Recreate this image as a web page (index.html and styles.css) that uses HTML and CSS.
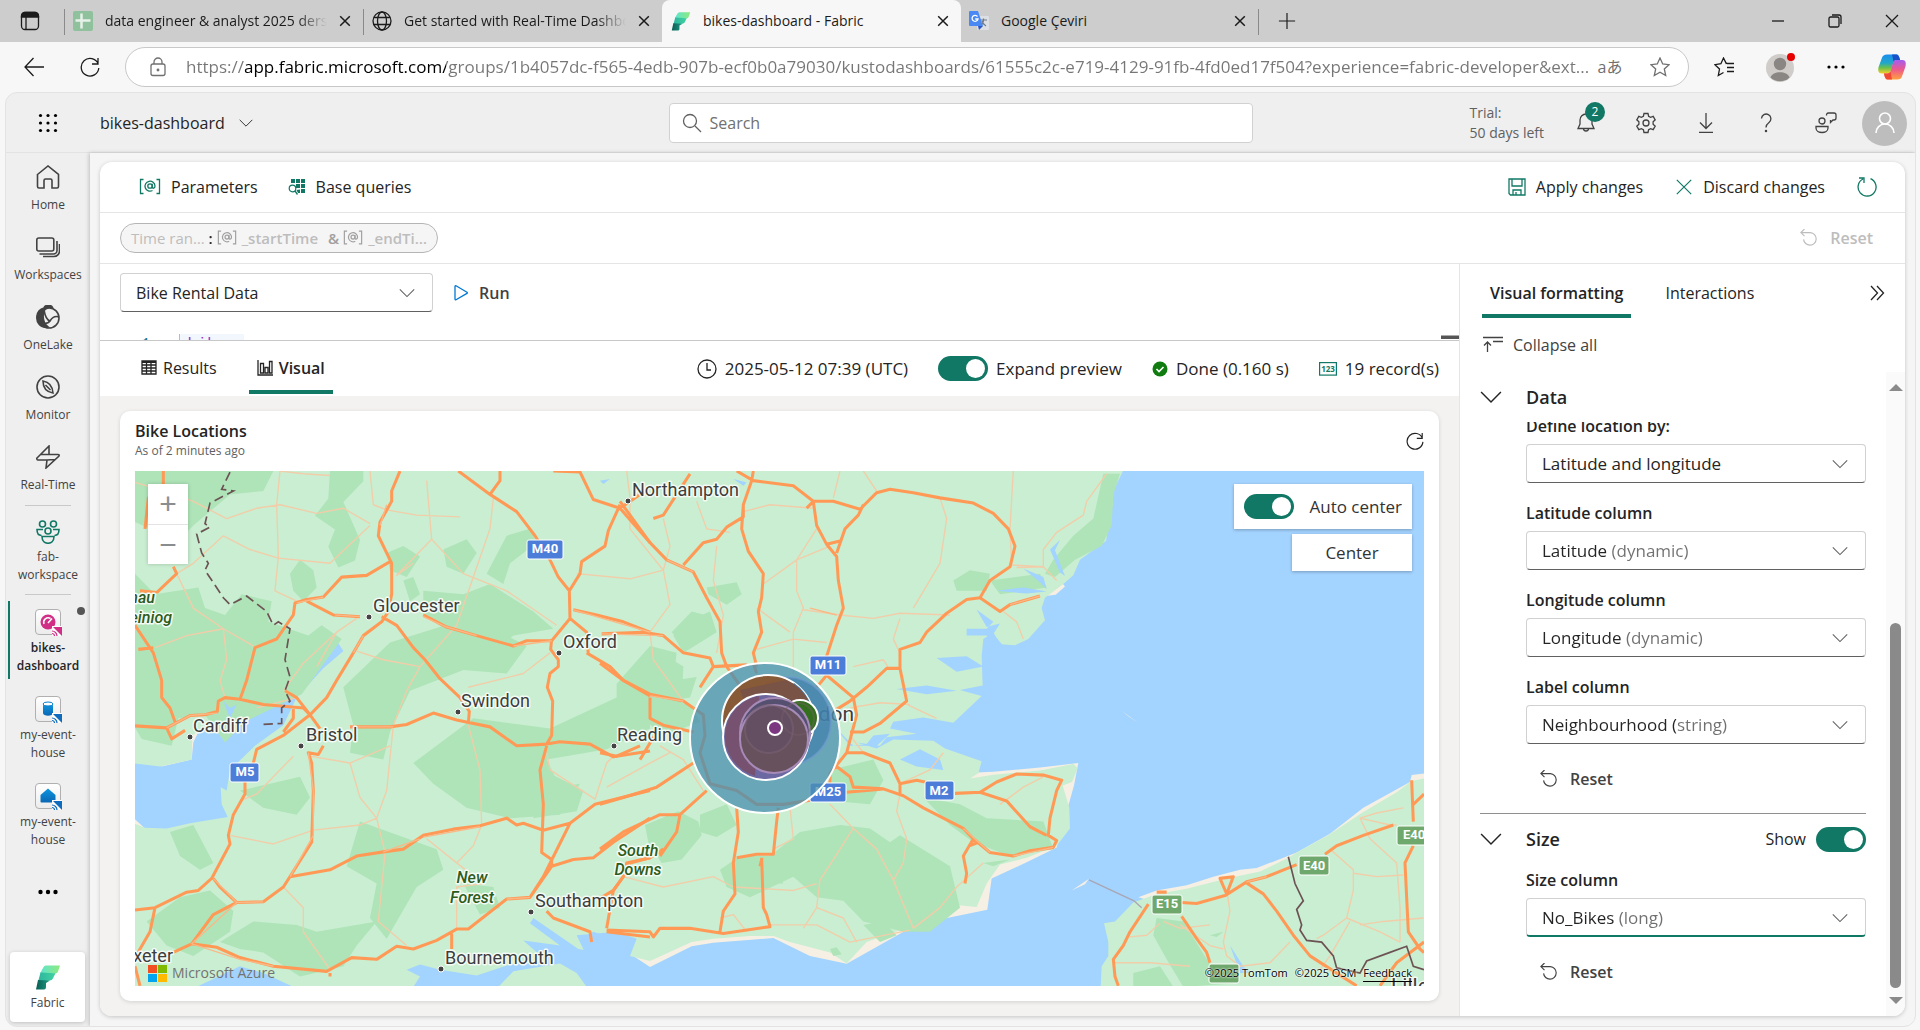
FILE: index.html
```html
<!DOCTYPE html>
<html lang="en">
<head>
<meta charset="utf-8">
<title>bikes-dashboard - Fabric</title>
<link rel="stylesheet" href="styles.css">
</head>
<body>
<svg class="defs" aria-hidden="true">
  <defs>
    <linearGradient id="fab-a" x1="0" y1="0" x2="1" y2="0"><stop offset="0" stop-color="#5fe3cf"/><stop offset="1" stop-color="#8dea7e"/></linearGradient>
    <linearGradient id="fab-b" x1="0" y1="0" x2="1" y2="0"><stop offset="0" stop-color="#2fb59f"/><stop offset="1" stop-color="#3fd2a0"/></linearGradient>
    <linearGradient id="fab-c" x1="0" y1="0" x2="1" y2="0"><stop offset="0" stop-color="#0a5e54"/><stop offset="1" stop-color="#1d9b84"/></linearGradient>
    <linearGradient id="cop-a" x1="0" y1="0" x2="0" y2="1"><stop offset="0" stop-color="#1a8df0"/><stop offset=".45" stop-color="#22a7c8"/><stop offset=".7" stop-color="#6cc04a"/><stop offset="1" stop-color="#f6cf2b"/></linearGradient>
    <linearGradient id="cop-b" x1="0" y1="0" x2="0" y2="1"><stop offset="0" stop-color="#a45cf0"/><stop offset=".5" stop-color="#ee5a8b"/><stop offset="1" stop-color="#ffa13d"/></linearGradient>
    <linearGradient id="blue" x1="0" y1="0" x2="0" y2="1"><stop offset="0" stop-color="#0d96e0"/><stop offset="1" stop-color="#0b67b4"/></linearGradient>
  </defs>
  <symbol id="chevron" viewBox="0 0 20 20"><path d="M1 5.500l9 9 9-9"/></symbol>
  <symbol id="close" viewBox="0 0 20 20"><path d="M2 2l16 16M18 2L2 18"/></symbol>
  <symbol id="undo" viewBox="0 0 20 20"><path d="M5 0L1 4l4 4M1.500 4H11.500a7 7 0 1 1-7.500 7.500"/></symbol>
  <symbol id="reload" viewBox="0 0 20 20"><path d="M18.200 7A8.800 8.800 0 1 0 18.800 11M18 1v6h-6"/></symbol>
  <symbol id="at" viewBox="0 0 22 18"><path d="M4.500 1.500H1.500v14h3M17.500 1.500h3v14h-3"/><circle cx="11" cy="8" r="2.200"/><path d="M13.200 5.800V9c0 2 2.800 1.600 2.800-1A5 5 0 1 0 13.500 12.500"/></symbol>
  <symbol id="fabric" viewBox="0 0 26 26"><path fill="url(#fab-a)" d="M8 4c1-2 2-2.500 4-2.500h13l-2 6c-.5 1.500-2 2-3 2H5z"/><path fill="url(#fab-b)" d="M5.500 8.500l15 .8-2.500 5c-.6 1.600-2 2.200-3.500 2.200L3 18z"/><path fill="url(#fab-c)" d="M3 16l12 .5-4 2.500 0 4c0 2-1 2.500-3 2.500H1z"/></symbol>
  <symbol id="link-badge" viewBox="0 0 10 10"><path fill="#fff" d="M0 0h10v10H0z"/><path fill="currentColor" d="M1 1h9v9L7 7 5 5z"/><path fill="none" stroke="currentColor" stroke-width="1.200" d="M0 5a5 5 0 0 1 5 5M0 7.500A2.500 2.500 0 0 1 2.500 10"/></symbol>
</svg>

<header class="browser">
  <div class="tabstrip">
    <button class="tab-menu" aria-label="Tab actions"><svg class="i i20" viewBox="0 0 20 20"><rect x="1.500" y="1.500" width="17" height="17" rx="3.500"/><path d="M6 6v12"/><path class="solid" d="M1.500 6V5A3.500 3.500 0 0 1 5 1.500h10A3.500 3.500 0 0 1 18.500 5v1z"/></svg></button>
    <div class="tab">
      <svg class="fav" viewBox="0 0 20 20"><rect width="20" height="20" rx="2" fill="#8fc19d"/><path d="M2.500 9.500h15M8.500 2.500v15" stroke="#e6f1e9" stroke-width="2.500"/></svg>
      <span class="tab-title fade">data engineer &amp; analyst 2025 ders notları</span>
      <button class="tab-close" aria-label="Close tab"><svg class="i i12"><use href="#close"/></svg></button>
    </div>
    <div class="tab">
      <svg class="fav i" viewBox="0 0 20 20"><circle cx="10" cy="10" r="9"/><ellipse cx="10" cy="10" rx="4.500" ry="9"/><path d="M2 6.500h16M2 13.500h16"/></svg>
      <span class="tab-title fade">Get started with Real-Time Dashboards</span>
      <button class="tab-close" aria-label="Close tab"><svg class="i i12"><use href="#close"/></svg></button>
    </div>
    <div class="tab active">
      <svg class="fav"><use href="#fabric"/></svg>
      <span class="tab-title">bikes-dashboard - Fabric</span>
      <button class="tab-close" aria-label="Close tab"><svg class="i i12"><use href="#close"/></svg></button>
    </div>
    <div class="tab last">
      <svg class="fav" viewBox="0 0 20 20"><rect x="8" y="5" width="12" height="14" rx="1" fill="#dcdfe4"/><path d="M11 9h7M14.500 7.500V9c0 3-2 5-4 6M13 10c.5 2 2 4 4 5" stroke="#6f7a88" stroke-width="1.200" fill="none"/><path d="M1 0h8l5 15H1a1 1 0 0 1-1-1V1a1 1 0 0 1 1-1z" fill="#4a89f3"/><path d="M10 19l4-4h-5z" fill="#2a56c6"/><path d="M8.500 5.500a3 3 0 1 0 .5 2.500H6.200" stroke="#fff" stroke-width="1.300" fill="none"/></svg>
      <span class="tab-title">Google Çeviri</span>
      <button class="tab-close" aria-label="Close tab"><svg class="i i12"><use href="#close"/></svg></button>
    </div>
    <button class="tab-new" aria-label="New tab"><svg class="i i20" viewBox="0 0 20 20"><path d="M10 1v18M1 10h18"/></svg></button>
    <div class="window-buttons">
      <button aria-label="Minimize"><svg class="i i14" viewBox="0 0 14 14"><path d="M1 7h12"/></svg></button>
      <button aria-label="Restore"><svg class="i i14" viewBox="0 0 14 14"><rect x="1" y="3" width="10" height="10" rx="1.500"/><path d="M4 1h7a2 2 0 0 1 2 2v7"/></svg></button>
      <button aria-label="Close"><svg class="i i14" viewBox="0 0 14 14"><path d="M1 1l12 12M13 1L1 13"/></svg></button>
    </div>
  </div>
  <div class="navbar">
    <button aria-label="Back"><svg class="i i22" viewBox="0 0 22 22"><path d="M21 11H2M10.500 2L2 11l8.500 9"/></svg></button>
    <button aria-label="Refresh"><svg class="i i20"><use href="#reload"/></svg></button>
    <div class="address">
      <svg class="i i20 muted" viewBox="0 0 20 20"><rect x="3" y="7" width="14" height="11.500" rx="2"/><path d="M6 7V5a4 4 0 0 1 8 0v2"/><circle class="solid" cx="10" cy="13" r=".8"/></svg>
      <input aria-label="Address" value="https://app.fabric.microsoft.com/groups/1b4057dc-f565-4edb-907b-ecf0b0a79030/kustodashboards/61555c2c-e719-4129-91fb-4fd0ed17f504?experience=fabric-developer&amp;ext...">
      <button class="translate" aria-label="Translate page">aあ</button>
      <button aria-label="Add to favorites"><svg class="i i20 muted" viewBox="0 0 20 20"><path d="M10 1l2.700 6 6.300.7-4.700 4.300 1.400 6.500L10 15.200 4.300 18.500l1.400-6.500L1 7.700 7.300 7z"/></svg></button>
    </div>
    <div class="nav-end">
      <button aria-label="Favorites"><svg class="i i20" viewBox="0 0 20 20"><path d="M13 6.200L12.200 6.400 9.500 1 6.900 6.700 1 7.700l4.500 4.300-1.200 6.500 5.200-3M13 6.500h7M13 10.500h7M13 14.500h7"/></svg></button>
      <button aria-label="Profile"><svg class="i30" viewBox="0 0 30 30"><circle cx="15" cy="16" r="14" fill="#cfccc9"/><circle cx="15" cy="12" r="6.200" fill="#8a8683"/><path d="M5.500 25.500c2-7 17-7 19 0a14 14 0 0 1-19 0z" fill="#8a8683"/><circle cx="26" cy="5" r="4" fill="#e60000"/></svg></button>
      <button aria-label="More"><svg class="i20" viewBox="0 0 20 20"><circle cx="3" cy="10" r="1.600"/><circle cx="10" cy="10" r="1.600"/><circle cx="17" cy="10" r="1.600"/></svg></button>
      <button aria-label="Copilot"><svg class="i30" viewBox="0 0 30 30"><path fill="url(#cop-a)" d="M10 2.500h9.500c1.700 0 2.300 1.500 2.800 3l.8 2.500h-3.500c-2 0-2.700 1-3.300 3l-2 7c-.8 2.500-1.600 3.500-3.800 3.500H4.500C1.200 21.500.8 18.500 1.600 15L4.700 6.500C5.800 3.500 7 2.500 10 2.500z"/><path fill="#1b50c8" d="M15 2.500h4.500c1.700 0 2.300 1.500 2.800 3l.8 2.500h-3.500c-1.600 0-2.400.7-3 2z"/><path fill="url(#cop-b)" d="M20 27.500h-9.500c-1.700 0-2.300-1.500-2.800-3L7 21.500h3.500c2 0 2.700-1 3.300-3l2-7c.8-2.500 1.600-3.500 3.800-3.500h6c3.200 0 3.700 3 2.900 6.500l-3.200 9C24.300 26.500 23 27.500 20 27.500z"/><path fill="#f04a33" d="M15 27.500h-4.500c-1.700 0-2.300-1.500-2.800-3L7 21.500h3.500c1.600 0 2.400-.7 3-2z"/></svg></button>
    </div>
  </div>
</header>

<div class="frame">
  <header class="app-header">
    <div class="app-name">
      <button class="waffle" aria-label="App launcher"><svg class="i20" viewBox="0 0 20 20"><circle cx="2.500" cy="2.500" r="1.600"/><circle cx="10" cy="2.500" r="1.600"/><circle cx="17.500" cy="2.500" r="1.600"/><circle cx="2.500" cy="10" r="1.600"/><circle cx="10" cy="10" r="1.600"/><circle cx="17.500" cy="10" r="1.600"/><circle cx="2.500" cy="17.500" r="1.600"/><circle cx="10" cy="17.500" r="1.600"/><circle cx="17.500" cy="17.500" r="1.600"/></svg></button>
      <button class="title-button">bikes-dashboard <svg class="i i14"><use href="#chevron"/></svg></button>
    </div>
    <label class="search">
      <svg class="i i20" viewBox="0 0 20 20"><circle cx="8" cy="8" r="6.500"/><path d="M13 13l6 6"/></svg>
      <input type="search" placeholder="Search" aria-label="Search">
    </label>
    <div class="app-tools">
      <div class="trial">Trial:<br>50 days left</div>
      <button class="bell" aria-label="Notifications"><svg class="i i20" viewBox="0 0 20 20"><path d="M10 1a6 6 0 0 0-6 6v4l-2 4.500h16L16 11V7a6 6 0 0 0-6-6zM7.500 15.500a2.500 2.500 0 0 0 5 0"/></svg><span class="badge">2</span></button>
      <button aria-label="Settings"><svg class="i i22" viewBox="0 0 22 22"><circle cx="11" cy="11" r="3"/><path d="M9 1.500h4l.6 2.700 2 1.100 2.600-.9 2 3.400-2.100 1.900v2.600l2.100 1.900-2 3.400-2.600-.9-2 1.100-.6 2.700H9l-.6-2.700-2-1.100-2.600.9-2-3.400 2.100-1.900V9.700L1.800 7.800l2-3.400 2.600.9 2-1.100z"/></svg></button>
      <button aria-label="Downloads"><svg class="i i20" viewBox="0 0 20 20"><path d="M10 0v15M4 9.500l6 6 6-6M3 19.500h14"/></svg></button>
      <button aria-label="Help"><svg class="i i20" viewBox="0 0 20 20"><path d="M5.500 5.500a4.700 4.700 0 1 1 7.500 4c-2 1.500-3 2.500-3 5"/><circle class="solid" cx="10" cy="18" r=".6"/></svg></button>
      <button aria-label="Feedback"><svg class="i i22" viewBox="0 0 22 22"><circle cx="7" cy="9" r="3"/><path d="M1 14.500h12v1.500c0 6-12 6-12 0zM11.500 3.500c0-1.500.5-2.500 2-2.500H19c1.500 0 2 1 2 2v3c0 1.500-.8 2-2 2h-1l-2.500 2.500V8"/></svg></button>
      <button class="avatar" aria-label="Account"><svg class="i i24" viewBox="0 0 24 24"><circle cx="12" cy="7.500" r="5.500"/><path d="M3 22a9 9 0 0 1 18 0"/></svg></button>
    </div>
  </header>

  <div class="frame-body">
    <nav class="rail" aria-label="Main">
      <a href="#home"><svg class="i i24" viewBox="0 0 24 24"><path d="M1.500 9.500L12 1l10.500 8.500v12c0 1-.5 1.500-1.500 1.500h-5v-7.500c0-1-.6-1.500-1.500-1.500h-5C8.600 14 8 14.500 8 15.500V23H3c-1 0-1.500-.5-1.500-1.500z"/></svg>Home</a>
      <a href="#workspaces"><svg class="i i24" viewBox="0 0 24 24"><rect x="0.800" y="3" width="17" height="13" rx="2"/><path d="M3.500 19h14a3.500 3.500 0 0 0 3.500-3.500V6M7 21.500h11a5.500 5.500 0 0 0 5.500-5.500V9"/></svg>Workspaces</a>
      <a href="#onelake"><svg class="i i24" viewBox="0 0 24 24"><path class="solid" d="M8 3C9-.5 15-.5 16.500 2.500 13 1.500 9 3 7.500 7 6.500 13 8 19 12 22 4 23 0 17 1 11 1.500 7 4 4 8 3z"/><circle cx="13" cy="13" r="10"/><path d="M8 5c1 6 3 10 6 11 3-5 6-5 9-4M5 19c4-1 7 0 9-3"/></svg>OneLake</a>
      <a href="#monitor"><svg class="i i24" viewBox="0 0 24 24"><circle cx="12" cy="12" r="11"/><path d="M7 6c6 1 9.500 5 10 12-6-1-10-5-10-12zM9.500 10l5 5"/></svg>Monitor</a>
      <a href="#real-time"><svg class="i i24" viewBox="0 0 24 24"><path d="M13 1L1 13c-.6.600 0 2 1 2h9l-1 8L23 11c.5-1-.2-1.500-1-1.500h-9zM5 9.500h8M11 15l8-.5"/></svg>Real-Time</a>
      <hr>
      <a class="tall" href="#fab-workspace"><svg class="i i24 green" viewBox="0 0 24 24"><circle cx="6.500" cy="4" r="3"/><circle cx="17.500" cy="4" r="3"/><circle cx="12" cy="11" r="3"/><path d="M7 9.500H1c0 4 2 6 4.500 6M17 9.500h6c0 4-2 6-4.500 6M6 16.500h12c0 9-12 9-12 0z"/></svg>fab-<br>workspace</a>
      <hr>
      <a class="item current" href="#bikes-dashboard"><span class="tile pink"><svg viewBox="0 0 24 24"><circle cx="12" cy="12" r="7.500" fill="currentColor"/><path d="M8 14a4.500 4.500 0 0 1 6.500-5.500M12 13l4-4.500" stroke="#fff" stroke-width="1.500" fill="none"/></svg><svg class="link-badge"><use href="#link-badge"/></svg></span>bikes-<br>dashboard<i class="unsaved"></i></a>
      <a class="item" href="#my-event-house"><span class="tile blue"><svg viewBox="0 0 24 24"><path d="M7 7v9c0 3.500 10 3.500 10 0V7z" fill="url(#blue)"/><ellipse cx="12" cy="7" rx="5" ry="2" fill="#fff" stroke="#0c80cc"/></svg><svg class="link-badge"><use href="#link-badge"/></svg></span>my-event-<br>house</a>
      <a class="item" href="#my-event-house-db"><span class="tile blue"><svg viewBox="0 0 24 24"><path d="M4.500 11L12 4.500l7.500 6.500v6.500c0 .6-.4 1-1 1h-13c-.6 0-1-.4-1-1z" fill="url(#blue)"/></svg><svg class="link-badge"><use href="#link-badge"/></svg></span>my-event-<br>house</a>
      <button class="rail-more" aria-label="More"><svg class="i20" viewBox="0 0 20 20"><circle cx="2.500" cy="10" r="2.200"/><circle cx="10" cy="10" r="2.200"/><circle cx="17.500" cy="10" r="2.200"/></svg></button>
      <a class="product" href="#fabric-home"><svg class="i26"><use href="#fabric"/></svg>Fabric</a>
    </nav>

    <main class="canvas">
      <div class="sheet">
        <div class="command-bar">
          <div class="cluster wide">
            <button class="cmd"><svg class="i at green"><use href="#at"/></svg>Parameters</button>
            <button class="cmd"><svg class="i18 green" viewBox="0 0 18 18"><path fill="currentColor" d="M3 1h4v4H3zM8 1h4v4H8zM13 1h4v4h-4zM8 6h4v4H8zM13 6h4v4h-4zM13 11h4v4h-4zM8.500 12l3.500-.500v3.500h-2z"/><path fill="none" stroke="currentColor" stroke-width="1.300" d="M7 13l2.500 3.500"/><circle cx="4.500" cy="10.500" r="3.300" fill="none" stroke="currentColor" stroke-width="1.200"/></svg>Base queries</button>
          </div>
          <div class="cluster">
            <button class="cmd"><svg class="i i18 green" viewBox="0 0 18 18"><path d="M1 1h16v16H2.500L1 15.500zM4 1v7h10V1M5 17v-5h8v5M8 17v-3"/></svg>Apply changes</button>
            <button class="cmd"><svg class="i i18 green"><use href="#close"/></svg>Discard changes</button>
            <button aria-label="Refresh dashboard"><svg class="i i20 green" viewBox="0 0 20 20"><path d="M13.500 1.700A9 9 0 1 1 6 2M2 1h5v5"/></svg></button>
          </div>
        </div>
        <div class="filter-bar">
          <button class="time-pill" disabled><span>Time ran…</span><b class="dark">:</b><svg class="i at"><use href="#at"/></svg><b>_startTime</b><b class="amp">&amp;</b><svg class="i at"><use href="#at"/></svg><b>_endTi…</b></button>
          <button class="reset" disabled><svg class="i i18"><use href="#undo"/></svg>Reset</button>
        </div>

        <div class="work">
          <section class="left">
            <div class="query-row">
              <div class="picker source"><select aria-label="Data source"><option>Bike Rental Data</option></select><svg class="i i16"><use href="#chevron"/></svg></div>
              <button class="run"><svg class="i i16" viewBox="0 0 16 16"><path d="M2 1.500c0-.600.500-1 1-.700l11 6.400c.5.300.5.900 0 1.200L3 14.800c-.5.300-1-.1-1-.7z"/></svg>Run</button>
            </div>
            <div class="editor"><span class="line-no">1</span><code>bikes</code><i class="minimap"></i></div>
            <div class="result-bar">
              <div class="tabs" role="tablist">
                <button role="tab"><svg class="i i16" viewBox="0 0 16 16"><path d="M1 1h14v13H1zM1 5h14M1 8h14M1 11h14M5.500 1v13M10 1v13"/><path d="M1 2h14" stroke-width="2"/></svg>Results</button>
                <button role="tab" aria-selected="true"><svg class="i i16" viewBox="0 0 16 16"><path d="M1 0v15h15M3.500 3.500h3V13h-3zM8 7.500h3V13H8zM12.500 1.500h2.500V13h-2.500z"/></svg>Visual</button>
              </div>
              <div class="status">
                <span><svg class="i i20" viewBox="0 0 20 20"><circle cx="10" cy="10" r="9"/><path d="M10 4v7h4"/></svg>2025-05-12 07:39 (UTC)</span>
                <label class="expand"><input class="switch" type="checkbox" role="switch" checked>Expand preview</label>
                <span class="done"><svg class="i16" viewBox="0 0 16 16"><circle cx="8" cy="8" r="7.500" fill="#107c10"/><path d="M4.500 8l2.500 2.500L11.500 6" fill="none" stroke="#fff" stroke-width="1.600"/></svg>Done (0.160 s)</span>
                <span><svg class="records" viewBox="0 0 18 14"><rect x=".6" y=".6" width="16.800" height="12.500" fill="#fff" stroke="#117865" stroke-width="1.200"/><text x="9" y="9.500" text-anchor="middle">123</text></svg>19 record(s)</span>
              </div>
            </div>

            <div class="stage">
              <article class="card">
                <header>
                  <div><h2>Bike Locations</h2><p>As of 2 minutes ago</p></div>
                  <button aria-label="Refresh visual"><svg class="i i18"><use href="#reload"/></svg></button>
                </header>
                <div class="map">
                  <svg class="map-art" viewBox="0 0 1289 515" preserveAspectRatio="xMidYMid slice" role="img" aria-label="Map of southern England">
                    <rect width="1289" height="515" fill="#a3d3ff"/>
                    <g transform="translate(-5 -11) scale(.33333 .34436)">
                      <g fill="#f5f0e3">
                        <path d="M2250 920L2590 905 2730 893 2845 880 2832 945 2780 1125 2690 1168 2585 1215 2572 1306 2400 1340 2330 1365 2150 1463 2040 1440 1930 1388 1750 1402 1685 1412 1560 1472 1470 1415z"/>
                        <path d="M3885 910L3845 915 3840 935 3700 1010 3600 1085 3500 1140 3380 1185 3330 1190 3250 1210 3170 1235 3080 1250 3025 1270 3060 1280 3885 1100zM2975 728l50 36-30-20zM2825 1250l52-34-12 16z"/>
                        <path d="M2745 395l50-40 10 12-28 24zM0 1030l45 40H0zM85 880l105-60-5 50-90 20zM165 790l50-20-30 60z"/>
                      </g>
                      <path fill="#c9eed1" d="M0 30H2980L2950 90 2948 130 2928 235 2850 290 2830 335 2800 360 2745 400 2735 430 2745 465 2695 520 2655 538 2610 535 2590 500 2560 520 2555 570 2558 655 2490 668 2555 685 2470 763 2380 748 2290 760 2280 780 2360 795 2270 805 2250 830 2180 820 2240 838 2290 812 2410 815 2445 838 2555 875 2545 910 2520 925 2590 914 2730 902 2830 883 2843 895 2826 935 2798 945 2818 1010 2820 1070 2780 1120 2690 1155 2610 1175 2570 1230 2540 1298 2455 1290 2400 1340 2330 1358 2210 1400 2150 1462 2100 1430 1980 1400 1930 1382 1860 1382 1750 1390 1685 1400 1560 1455 1500 1440 1480 1400 1390 1370 1350 1395 1380 1425 1345 1420 1210 1330 1200 1345 1290 1410 1180 1395 1250 1455 1140 1465 1040 1497 930 1480 870 1465 830 1480 870 1500 850 1530H490L400 1490 330 1470 200 1530H0V1050L45 1068 110 1070 180 1055 293 1037 275 1000 272 950 290 960 300 900 375 830 460 770 500 690 580 605 640 555 625 532 580 590 495 640 480 670 440 715 280 745 230 770 187 800 185 870 90 890 0 880zM1105 1530L1150 1485 1290 1462 1340 1490 1370 1530zM3882 925L3845 932 3800 965 3695 1025 3595 1090 3500 1140 3475 1155 3390 1195 3290 1215 3170 1245 3080 1260 3010 1285 2955 1340 2922 1345 2935 1400 2935 1440 2915 1470 2912 1530H3882z"/>
                      <path fill="#aee4b8" d="M15 32H430L400 90 300 100 190 190 130 250 60 200 15 180zM600 32h100v30l-60 60 50 110-15 60-50 20-30-60 20-50-60-40 40-50zM480 330l30-40 40 30 10 50-40 40-30-30zM15 330l60 60 130-20 20 60 60 20 50-60 90 20-10 60 120 40 40-30 60 40-120 160-170 80-60 60-60-80-80 10-20 80-90-20-60-100 30-80-40-60zM170 510l120 50-20 90 60 40-100 40-60-90zM640 660l140-130 200-60 90 10 120 60-60 80-130-10-160 60-60 120-20 80-100-20 10-80zM820 350l30-10 20 50-30 20zM880 380l120 10 80-30 130 80 60 50-120 20-60 50-130-60-80-50zM1070 330l60-110 70-20 20 40-80 60-20 60zM770 270l50-20 50 30-40 60-50-20zM940 260l70-30 30 40-40 60-50-20zM850 880l180-130 230 30 200-90 100 10v80l-130 60-180 30 40 80 60-10-60 90-150 10-130-30-100-70zM420 940l90-20 30 60-40 50-100-20-70-50zM1240 900l120 60-20 60-130 20zM690 1050l230 80 20 60-80 50-90 150-50-60 20-100-90-50zM120 1080l70-20 60 110-40 20-60-40zM150 1270l90-20 70 60-10 60-110 70-80-30-60-70zM270 1400l100-60 130 10 60 20 180-30-60 70-40 60-130 30-110-70-70-10zM1000 1230l90 10 20 60-60 20zM1560 540l80 20-10 80 70-10-20 60-130 20-90 20 0-80zM1560 690l120 20 30 50-110 40-50-40zM1625 500l60-60 40 10 0 70-50 30z"/>
                      <path fill="#aee4b8" d="M1630 510l60-50 50-20 20 60-100 60zM1730 370l90-15 15 35-45 30-55-30zM1570 650l40-80 50 30 -5 110-90 0zM1545 1060l100-40 60 30 10 40-60 70-60 10-40-60zM1710 1030l80-30 30 60-60 35-50-15zM2010 1080l120-20 90 10 60 40 30-20 150 90 30 120-90 70-80 0-120-30-60-60-80-10-70-60-130 60-70-30-20-50 60-40 90 0zM1850 1160l70-10 40 80-80 0zM2100 900l130-30 30 60-40 70-110-10zM2380 980l110 20 80 40 170 10 30 80-130 20-110-40-70-50zM2200 1350l60-10 40 40-50 20zM2100 1420l20-5 15 20-25 5zM2470 350l50-30 60 10-10 50-90 0zM2580 350l150-20 20 40-140 20zM2560 1170l80-10-50 20zM2770 290l60-70 60-50 30-130h50l-20 60-5 90-30 60-80 40-60 50-30-10zM3080 1330l80 10 90 140 60 40-150 10-50-80-40-70zM3010 1490l80-20 40 60h-120zM3240 1380l40-10-20 15z"/>
                      <path fill="#a3d3ff" d="M2540 435l30 50 40-10-20 30 30 35-30 0-20-30-60 0 0-20 60 0 20-20zM2420 575l90-5 50 30-80 15zM2300 665l90-10 90 15-90 10zM2310 870l60-30 60 30 10 30-80-10zM2600 380l80-10 70 12-60 6zM2760 260l30-28-15 30 30 75-15-10zM3300 1410l40 60 20 20-30 0zM280 700l20 20 20-10-20 40zM2110 770l60 60 40-5 20-25 50-5-40 35-80 0zM1340 1380l120-10 60 20-20 50-60-10-20 30-50-20zM1410 60l30-5-20 15zM1810 55l40 10-10 10zM2680 315l60 25 10 35-20-20z"/>

                      <g class="minor">
                        <path d="M15 65L100 90 190 120 290 170 380 140 450 130 560 155 640 140 720 185M450 32L440 130 445 280 435 380 500 410M280 220L360 260 445 285 600 300 720 190M720 32L730 130 770 145M770 145L860 160 990 165M890 60L905 230 800 335 850 300M905 230L1000 330 1130 380 1280 480M1090 110L1080 200 1030 340 980 480 870 600 830 670 790 770 770 960 740 1040M280 220L190 300 140 330 190 430 280 490 290 580 270 640 285 690M75 545L170 510 280 490 370 540M500 690L380 720M620 500L520 590 460 670M560 600L620 500 680 460M1015 770L1050 900 1055 1060 1030 1120 980 1170 890 1100M490 860L380 970 330 990M660 880L690 980 740 1040 690 1060 550 1075 430 1115 300 1090M540 860L660 880 780 830M740 1040L765 1140 745 1340 830 1410M460 1240L520 1300 520 1370 600 1480M1250 850L1260 900 1395 985 1430 880 1450 860M980 1170L1060 1230 980 1240 980 1360M1015 660L1180 620 1260 560M870 600L760 580 680 555M450 32L520 40 600 45"/>
                        <path d="M1490 32L1500 110 1500 200 1600 320M1600 170L1620 250 1600 320 1500 345 1340 330M1700 120L1730 200 1800 210M1600 320L1620 420 1560 500 1570 580 1660 700M1760 250L1750 350 1780 450 1760 560M1840 150L1920 130 2050 140M2130 32L2110 110M2060 200L2000 290 2000 380 2020 430 1990 500 1990 620M1900 360L2000 290 2100 250M2240 90L2200 32M2430 110L2450 170 2430 300 2350 430M2020 435L2130 450 2230 460 2310 445 2460 450M2310 460L2290 520 2310 560M1880 430L1980 500M1880 550L1990 520 2090 530M2650 30L2640 200 2645 305 2740 310M2620 440L2660 470 2680 520M2170 600L2260 580 2280 610M2160 720L2250 705 2340 710M2330 710L2420 750M2160 800L2200 850M1620 850L1560 880 1430 950M1980 1010L1990 1100 1930 1130M2100 1000L2170 1070 2240 1130 2290 1220 2350 1360M2170 1070L2070 1220 2060 1300 2020 1360M2310 970L2300 1020 2330 1100 2320 1170 2290 1220M1480 1210L1600 1240 1750 1210 1810 1240 1990 1250 2060 1230M1920 1350L2060 1350 2160 1400 2340 1365M2350 1360L2430 1300 2480 1240 2560 1170M2440 850L2400 900 2310 940M1770 1330L1810 1320 1850 1370M2610 1000L2680 950 2740 920M2930 40L2870 120 2860 160 2780 210 2740 260 2740 310 2780 350M2740 310L2660 312M2060 1300L2140 1330 2180 1400M1590 830L1660 870 1720 960"/>
                        <path d="M3290 1250L3300 1310 3280 1400 3290 1440 3330 1470M3100 1340L3150 1360 3240 1350M3000 1385L3050 1380 3090 1345M2950 1460L3060 1460 3180 1470M3150 1350L3240 1410 3280 1420M3600 1130L3670 1190 3670 1250 3650 1330 3750 1370 3810 1400M3670 1200L3740 1210 3820 1205M3690 1040L3780 1060 3800 1060M3690 1040L3720 1100 3800 1170 3810 1300 3810 1400M3650 1330L3580 1380 3560 1390M3660 1340L3600 1440 3570 1480M3690 1040L3740 1025 3820 1010M3690 1350L3760 1340 3880 1330M3330 1470L3420 1460 3480 1400"/>
                      </g>
                      <g class="major">
                        <path d="M100 32L100 70 55 110 45 200M15 480L70 560 95 640 95 690 120 720 135 760M25 550L70 545M15 772L110 778 180 742 225 740 262 730 265 700 285 690 330 695 400 710 460 715 520 720 540 740 570 780M330 695L350 640 375 545 440 520 490 450 495 415 530 405 580 398 635 340 710 335 780 295M110 778L125 810 165 785M810 32L785 90 785 120 750 180 745 220 785 300 785 390 775 440 755 470 700 510 670 560 620 640 590 690 540 740 460 800 380 840 370 880 345 920 345 970 310 1030 295 1090 300 1115 245 1215 205 1250 170 1255 75 1300 15 1307M465 670L500 690 540 740M490 720L490 750 460 790M530 410L610 450 690 455M75 1300L60 1370 30 1420 15 1450M250 1215L270 1240 320 1285 400 1283 460 1240 480 1210 545 1110 550 960 545 880 535 850 565 855 580 830M480 1210L600 1190 680 1150 760 1138 820 1130 880 1090 970 1072 1050 1062 1130 1040 1160 1060 1180 1055 1240 1075 1320 1055 1395 1000 1560 960M320 1285L250 1320 185 1405 130 1430M185 1405L260 1415 330 1445 430 1470 590 1485 665 1445 740 1450 800 1412 850 1420 920 1395 980 1362 1015 1362 1130 1275 1200 1270 1265 1180 1330 1160 1390 1155 1450 1110 1560 1040M965 1375V1420M1200 1270L1240 1210 1320 1055M600 1490V1500M755 455L800 480 850 545 885 580 930 635 990 690 1018 730 1015 765M660 775L780 775 830 768 910 735 980 755 1080 775 1160 830 1250 825 1290 818 1380 825 1450 862 1560 845M1250 830L1230 900 1240 1000 1235 1140 1265 1160 1265 1180M1250 825L1265 800 1268 700 1252 660 1260 620 1285 600 1285 580 1262 550 1265 520M880 450L950 485 1040 510 1150 540 1190 525 1265 525 1320 460 1318 380 1285 340 1260 290 1215 220 1160 150 1080 100 985 32M1110 32L1110 60 1080 100M1318 380L1350 330 1355 295 1425 250 1435 205 1470 130M1320 460L1370 500 1375 565M1330 435L1400 450 1480 470 1560 500M1370 560L1440 600 1480 640 1560 685M1270 32L1350 35 1390 115 1470 140 1560 240M1470 140L1530 100M1250 1310L1270 1330 1380 1370 1385 1400M1430 1370L1560 1385M1430 1360L1450 1250 1480 1210 1490 1170 1560 1155M80 385L140 330 130 310M30 380L80 385M15 1470L30 1527"/>
                        <path d="M1470 120L1560 240 1610 290 1690 325 1730 400 1770 470 1775 560 1790 600M1570 170L1600 160 1680 40M1660 305L1720 240 1760 230 1790 195 1840 165 1840 130 1865 60 1870 32M1820 32L1870 60 1990 75 2050 120 2110 120 2190 143 2240 95 2280 85 2350 95 2430 110 2530 125 2590 155 2635 200 2655 250 2640 310 2580 350 2550 400 2510 405 2450 445 2390 500 2370 530 2310 550 2310 605 2330 700 2250 765 2200 790 2160 790M2050 120L2060 190 2090 245 2120 280 2125 350 2140 430 2120 480 2090 570 2090 625 2170 690 2180 740 2150 850 2100 910 2100 950M2050 120L2030 140M2120 270L2145 200 2185 160 2200 130M2090 245L2130 235M1840 130L1835 200 1855 265 1900 330 1895 400 1885 440 1895 500 1870 560 1880 600M1415 505L1540 500 1600 510 1660 560 1740 575 1750 600 1850 595M1410 590L1480 640 1560 680 1660 700 1690 720M1560 690L1560 750 1600 770 1690 790M1750 600L1710 660M2550 400L2610 440 2640 420 2730 395M2110 730L2160 700 2210 660 2270 605 2310 605M1410 850L1460 860 1530 830M1530 870L1580 790M1410 1000L1480 980 1580 950 1690 880M1410 1130L1480 1080 1590 1030 1650 1030 1730 960M1590 1150L1640 1080 1650 1030M1430 1365L1560 1370 1570 1385 1590 1360 1680 1360 1780 1375 1920 1355 1910 1320 1900 1300 1895 1155M1415 1270L1450 1250 1480 1210 1500 1170 1560 1155 1600 1130M1820 1010L1825 1080 1810 1170 1815 1260 1780 1310 1770 1370M1820 1155L1880 1145 1930 1145 1940 1050 1945 1010M1895 1160L1890 1180M2120 890L2160 920 2170 950 2260 955 2320 975 2380 1010 2500 1070 2530 1100 2580 1140 2650 1150 2700 1135 2770 1125 2780 1105 2755 1090 2760 1040 2780 960 2795 930 2740 915 2660 912 2600 935 2550 965 2475 968M2150 965L2260 955M2150 850L2200 850 2280 880 2310 940 2310 970M2310 940L2360 930 2385 935M2550 965L2630 990 2700 1065 2750 1090M2530 1100L2500 1150 2510 1200 2505 1230M2520 1120L2545 1110"/>
                        <path d="M1690 720L1720 740 1725 800 1710 850 1740 940 1820 960 1880 1000 1960 1000 2060 985M1790 600L1830 655M1870 590L1880 620M2090 625L2060 660"/>
                        <path d="M3155 1285L3200 1288 3285 1265 3350 1225 3410 1210 3500 1175M3345 1225L3400 1260 3440 1310 3490 1380 3540 1440 3620 1490 3680 1527M3585 1145L3620 1120 3700 1090 3790 1060M3845 930L3850 1050M3850 1000L3882 970M3850 1120L3825 1170 3835 1370 3870 1420 3882 1430M3882 1400L3800 1460 3750 1527M3055 1290L3000 1370 2980 1410 2950 1450 2955 1500 2965 1527M3155 1325L3200 1390 3230 1430 3240 1460M3270 1215L3290 1260 3310 1210zM3080 1255h30"/>
                      </g>
                      <g class="trunk">
                        <path d="M110 778L180 742 262 735M500 415L580 398M615 450L690 455M880 455L950 485 1040 510M1150 540L1265 525M1330 435L1560 500M680 775L790 775M880 1095L1050 1065M250 1215L320 1285 400 1283M760 1138L870 1100M320 1285L185 1405 330 1450 430 1470M535 850L550 960 550 1090 480 1210M750 190L770 130M700 510L670 560M1130 1275L1200 1270M1415 505L1600 510M1690 325L1610 290M2040 430L2120 450M1560 685L1660 700M2230 460M2500 1070L2580 1140M2650 1150L2770 1125M2730 395L2640 420M3350 1225L3410 1210"/>
                      </g>
                      <path class="border" stroke-dasharray="28 14" d="M300 35L275 85 310 90 240 125 225 185 240 195 200 215 215 270 235 300 225 320 280 400 300 420 350 395 410 440 430 480 445 470 480 490 465 580 480 630 465 670 480 700 455 720 455 765 400 768"/>
                      <path class="border" d="M3475 1152L3495 1230 3520 1280 3500 1305 3515 1350 3510 1365 3530 1395 3575 1400 3610 1440 3620 1475 3690 1490 3710 1455 3780 1430 3830 1412 3850 1470 3882 1480"/>
                      <path d="M2877 1219L3012 1280 3035 1300" fill="none" stroke="#a9a6b3" stroke-width="4"/>
                    </g>
                    <g class="parks" text-anchor="middle">
                      <text x="20" y="132" text-anchor="end">Bannau</text><text x="37" y="152" text-anchor="end">Brycheiniog</text>
                      <text x="337" y="412">New</text><text x="337" y="432">Forest</text>
                      <text x="503" y="385">South</text><text x="503" y="404">Downs</text>
                    </g>
                    <g class="dots"><circle cx="234" cy="146" r="3"/><circle cx="424" cy="182" r="3"/><circle cx="323" cy="241" r="3"/><circle cx="55" cy="266" r="3"/><circle cx="166" cy="275" r="3"/><circle cx="479" cy="275" r="3"/><circle cx="493" cy="30" r="3"/><circle cx="396" cy="441" r="3"/><circle cx="306" cy="498" r="3"/></g>
                    <g class="cities">
                      <text x="238" y="141">Gloucester</text><text x="428" y="177">Oxford</text><text x="326" y="236">Swindon</text><text x="58" y="261">Cardiff</text><text x="171" y="270">Bristol</text><text x="482" y="270">Reading</text><text x="497" y="25">Northampton</text><text x="400" y="436">Southampton</text><text x="310" y="493">Bournemouth</text><text x="38" y="491" text-anchor="end">Exeter</text><text class="big" x="719" y="250" text-anchor="end">London</text><text class="big" x="1256" y="522">Lille</text>
                    </g>
                    <g class="shields" text-anchor="middle">
                      <rect x="392" y="69" width="36" height="19" rx="2"/><text x="410" y="82">M40</text>
                      <rect x="95" y="292" width="29" height="19" rx="2"/><text x="110" y="305">M5</text>
                      <rect x="675" y="185" width="36" height="19" rx="2"/><text x="693" y="198">M11</text>
                      <rect x="675" y="312" width="36" height="19" rx="2"/><text x="693" y="325">M25</text>
                      <rect x="790" y="310" width="29" height="19" rx="2"/><text x="804" y="324">M2</text>
                      <g class="euro"><rect x="1017" y="424" width="30" height="19" rx="2"/><text x="1032" y="437">E15</text><rect x="1164" y="385" width="30" height="19" rx="2"/><text x="1179" y="399">E40</text><rect x="1262" y="355" width="30" height="19" rx="2"/><text x="1279" y="368">E40</text><rect x="1074" y="493" width="30" height="19" rx="2"/></g>
                    </g>
                    <g class="bubbles">
                      <circle cx="630" cy="267" r="75" fill="#4a8fb0" fill-opacity=".76" stroke="#fff"/>
                      <circle cx="652" cy="250" r="44" fill="#3a78a8" fill-opacity=".6" stroke="#6f9bd0" stroke-opacity=".6"/>
                      <circle cx="633" cy="250" r="46" fill="#8a5630" fill-opacity=".95" stroke="#fff"/>
                      <path d="M659 212a46 46 0 0 1 18 50l-19 35-20-2 0-60z" fill="#4a79a3" stroke="none"/>
                      <path d="M651 209a44 44 0 0 1 24 24l-60 12-10-26z" fill="#7a5347" stroke="none"/>
                      <circle cx="665" cy="247" r="18" fill="#33701d" stroke="#fff"/>
                      <circle cx="631" cy="266" r="43" fill="#6c66a0" fill-opacity=".97" stroke="#fff"/>
                      <path d="M590 262a42 42 0 0 1 34-37l-4 80a42 42 0 0 1-30-43z" fill="#775270" stroke="none"/>
                      <circle cx="640" cy="262" r="35" fill="#565070" stroke="#a68bb8"/>
                      <circle cx="639" cy="268" r="34" fill="#66515c" stroke="#a68bb8"/>
                      <circle cx="634" cy="258" r="24" fill="#5f4d66" fill-opacity=".5" stroke="#7e6478" stroke-opacity=".5"/>
                      <circle cx="663" cy="248" r="16" fill="none" stroke="#77606c" stroke-opacity=".4"/>
                      <circle cx="640" cy="257" r="7" fill="#7b3880" stroke="#fff"/>
                    </g>
                  </svg>
                  <div class="zoom"><button aria-label="Zoom in">+</button><button aria-label="Zoom out">−</button></div>
                  <div class="map-actions">
                    <label><input class="switch" type="checkbox" role="switch" checked>Auto center</label>
                    <button>Center</button>
                  </div>
                  <div class="azure"><svg viewBox="0 0 19 17"><path fill="#f25022" d="M0 0h9v8H0z"/><path fill="#7fba00" d="M10 0h9v8h-9z"/><path fill="#00a4ef" d="M0 9h9v8H0z"/><path fill="#ffb900" d="M10 9h9v8h-9z"/></svg>Microsoft Azure</div>
                  <div class="copyright"><span>©2025 TomTom</span><span>©2025 OSM</span><a href="#feedback">Feedback</a></div>
                </div>
              </article>
            </div>
          </section>

          <aside class="panel">
            <div class="panel-tabs" role="tablist">
              <button role="tab" aria-selected="true">Visual formatting</button>
              <button role="tab">Interactions</button>
              <button class="collapse-pane" aria-label="Collapse pane"><svg class="i i16" viewBox="0 0 16 16"><path d="M2 1l6.500 7L2 15M8 1l6.500 7L8 15"/></svg></button>
            </div>
            <button class="collapse-all"><svg class="i i20" viewBox="0 0 20 18"><path d="M0 1.500h20M10 5.500h10M4.500 16V6M1 9.500L4.500 6 8 9.500"/></svg>Collapse all</button>
            <div class="scroller">
              <div class="fields">
                <section>
                  <h3><button aria-label="Toggle Data"><svg class="i i22"><use href="#chevron"/></svg></button>Data</h3>
                  <div class="group scrolled">
                    <label for="f1">Define location by:</label>
                    <div class="picker"><select id="f1"><option>Latitude and longitude</option></select><svg class="i i16"><use href="#chevron"/></svg></div>
                    <label for="f2">Latitude column</label>
                    <div class="picker typed latitude"><select id="f2"><option>Latitude (dynamic)</option></select><svg class="i i16"><use href="#chevron"/></svg></div>
                    <label for="f3">Longitude column</label>
                    <div class="picker typed longitude"><select id="f3"><option>Longitude (dynamic)</option></select><svg class="i i16"><use href="#chevron"/></svg></div>
                    <label for="f4">Label column</label>
                    <div class="picker typed neighbourhood"><select id="f4"><option>Neighbourhood (string)</option></select><svg class="i i16"><use href="#chevron"/></svg></div>
                    <button class="reset"><svg class="i i18"><use href="#undo"/></svg>Reset</button>
                  </div>
                </section>
                <section class="size">
                  <h3><button aria-label="Toggle Size"><svg class="i i22"><use href="#chevron"/></svg></button>Size<label class="show">Show<input class="switch" type="checkbox" role="switch" checked></label></h3>
                  <div class="group">
                    <label for="f5">Size column</label>
                    <div class="picker typed bikes focused"><select id="f5"><option>No_Bikes (long)</option></select><svg class="i i16"><use href="#chevron"/></svg></div>
                    <button class="reset"><svg class="i i18"><use href="#undo"/></svg>Reset</button>
                  </div>
                </section>
              </div>
              <div class="scrollbar" aria-hidden="true"><i class="up"></i><span class="track"><i class="thumb"></i></span><i class="down"></i></div>
            </div>
          </aside>
        </div>
      </div>
    </main>
  </div>
</div>
</body>
</html>
```
FILE: styles.css
```css
:root {
  --green: #117865;
  --ink: #242424;
  --line: #e5e5e5;
}

* { box-sizing: border-box; }

body {
  margin: 0;
  min-height: 100vh;
  display: flex;
  flex-direction: column;
  background: #f7f7f7;
  color: var(--ink);
  font: 16px/20px "Open Sans", "Noto Sans", sans-serif;
}

button, input, select { font: inherit; color: inherit; }
button { display: inline-flex; align-items: center; justify-content: center; padding: 0; border: 0; background: none; }
a { color: inherit; text-decoration: none; }
h2, h3, p { margin: 0; }
svg { flex: none; display: block; }

.defs { position: absolute; width: 0; height: 0; }
.i { fill: none; stroke: currentColor; stroke-width: 1.3; }
.i .solid { fill: currentColor; }
.i12 { width: 12px; height: 12px; stroke-width: 2.5; }
.i14 { width: 14px; height: 14px; }
.i16 { width: 16px; height: 16px; }
.i18 { width: 18px; height: 18px; }
.i20 { width: 20px; height: 20px; }
.i22 { width: 22px; height: 22px; }
.i24 { width: 24px; height: 24px; stroke-width: 1.6; }
.i26 { width: 26px; height: 26px; }
.i30 { width: 30px; height: 30px; }
.at { width: 22px; height: 18px; }
.green { color: var(--green); }
.muted { color: #707070; }

/* Browser chrome */
.tabstrip { display: flex; align-items: center; height: 42px; background: #cdcdcd; color: #1b1b1b; }
.tab-menu { width: 64px; padding-right: 4px; }
.tab { display: flex; align-items: center; gap: 12px; width: 299px; height: 42px; padding: 0 12px 0 8px; font-size: 14px; border-left: 1px solid transparent; }
.tab:not(.active):not(.last) { border-image: linear-gradient(transparent 10px, #8a8a8a 10px 34px, transparent 34px) 1; }
.tab.last { border-left: 0; width: 298px; border-right: 1px solid; border-image: linear-gradient(transparent 10px, #8a8a8a 10px 34px, transparent 34px) 1; }
.tab.active { background: #f7f7f7; border-radius: 8px 8px 0 0; }
.fav { width: 20px; height: 20px; }
.tab-title { flex: 1; overflow: hidden; white-space: nowrap; }
.fade { mask-image: linear-gradient(90deg, #000 calc(100% - 30px), transparent); }
.tab-new { width: 56px; }
.tab-new svg { width: 18px; height: 18px; }
.window-buttons { display: flex; margin-left: auto; }
.window-buttons button { width: 57px; height: 42px; }

.navbar { display: flex; align-items: center; height: 50px; color: #1b1b1b; padding-left: 6px; }
.navbar > button { width: 56px; }
.address { flex: 1; display: flex; align-items: center; gap: 4px; height: 40px; margin: 0 7px; padding: 0 18px 0 22px; border: 1px solid #c8c8c8; border-radius: 20px; background: #fff; }
.address > svg { margin-right: 14px; }
.address input {
  flex: 1; min-width: 0; border: 0; padding: 0; outline: 0;
  font-size: 17px;
  color: transparent;
  background: linear-gradient(90deg, #767676 59px, #000 59px 260px, #767676 260px) text;
}
.address .translate { color: #707070; font-family: "Open Sans", "Noto Sans CJK JP", sans-serif; width: 28px; margin-right: 22px; }
.nav-end { display: flex; }
.nav-end button { width: 56px; }

/* App frame */
.frame { flex: 1; display: flex; flex-direction: column; margin: 0 4px 3px 5px; border: 1px solid #e3e3e3; border-radius: 12px; overflow: hidden; background: #efefef; }
.app-header { display: grid; grid-template-columns: 1fr minmax(200px, 584px) 1fr; align-items: center; height: 60px; padding-top: 1px; border-bottom: 1px solid #e3e3e3; }
.app-name { display: flex; align-items: center; }
.waffle { width: 84px; color: #424242; }
.title-button { gap: 14px; margin-left: 10px; }
.search { display: flex; align-items: center; gap: 8px; height: 40px; padding: 0 12px; background: #fff; border: 1px solid #d1d1d1; border-radius: 4px; color: #616161; }
.search input { flex: 1; min-width: 0; border: 0; outline: 0; background: none; padding: 0; }
.search input::placeholder { color: #707070; opacity: 1; }
.app-tools { display: flex; justify-content: flex-end; align-items: center; color: #424242; padding-right: 8px; }
.app-tools button { width: 60px; height: 44px; }
.trial { font-size: 14px; color: #616161; margin-right: 12px; }
.bell { position: relative; }
.badge { position: absolute; left: 29px; top: 1px; width: 20px; height: 20px; border-radius: 50%; background: var(--green); color: #fff; font-size: 12px; }
.app-tools .avatar { width: 45px; height: 45px; margin-left: 6px; border-radius: 50%; background: #bdbdbd; color: #fff; }

.frame-body { flex: 1; display: flex; }
.rail { display: flex; flex-direction: column; align-items: stretch; width: 84px; padding: 2px 4px 4px; color: #424242; font-size: 12px; line-height: 18px; text-align: center; }
.rail a { display: flex; flex-direction: column; align-items: center; gap: 7px; height: 70px; padding: 10px 0 0; }
.rail hr { width: 46px; height: 1px; margin: 0 auto 4px; border: 0; background: #c9c9c9; }
.rail a.tall { height: 84px; display: block; }
.rail a.item { position: relative; display: block; height: 87px; }
.rail a.tall > svg, .rail .tile { margin: 0 auto 4px; }
.rail a.current { color: var(--ink); font-weight: 600; }
.current::before { content: ""; position: absolute; left: -2px; top: 2px; height: 78px; border-left: 2px solid var(--green); }
.unsaved { position: absolute; right: 1px; top: 8px; width: 8px; height: 8px; border-radius: 50%; background: #555; }
.tile { position: relative; display: block; width: 26px; height: 26px; border: 1px solid #b0b0b0; border-radius: 4px; background: linear-gradient(#fff, #ececec); }
.tile .link-badge { position: absolute; right: -2px; bottom: -2px; width: 10px; height: 10px; }
.pink { color: #d12f86; }
.blue { color: #0f6cbd; }
.rail-more { height: 64px; }
.rail a.product { margin-top: auto; gap: 4px; background: #fff; border-radius: 4px; box-shadow: 0 1px 4px #0003; padding-top: 12px; margin-right: 1px; }

.canvas { flex: 1; min-width: 0; display: flex; padding: 9px 10px 10px; background: #f5f5f5; box-shadow: -1px 0 4px #0003; }
.sheet { flex: 1; min-width: 0; display: flex; flex-direction: column; background: #fff; border-radius: 12px; box-shadow: 0 1px 4px #0003; overflow: hidden; }

.command-bar, .filter-bar { display: flex; justify-content: space-between; align-items: center; height: 51px; border-bottom: 1px solid var(--line); padding: 0 28px 0 39px; }
.filter-bar { padding: 0 32px 0 20px; }
.cluster { display: flex; gap: 32px; }
.cluster.wide { gap: 30px; }
.cmd { gap: 10px; }
.time-pill { gap: 4px; height: 30px; padding: 0 10px; border: 1px solid #b5b5b5; border-radius: 15px; background: #f5f5f5; color: #bdbdbd; font-size: 15px; }
.time-pill .at { width: 20px; color: #a0a0a0; margin-right: 1px; }
.time-pill b { font-weight: 600; }
.time-pill .dark { color: var(--ink); }
.time-pill .amp { margin-left: 6px; color: #a0a0a0; }
.reset { gap: 12px; font-weight: 600; color: #424242; }
.reset:disabled { color: #bdbdbd; }

.work { flex: 1; display: flex; min-height: 0; }
.left { flex: 1; min-width: 0; display: flex; flex-direction: column; }
.query-row { display: flex; align-items: center; gap: 20px; height: 59px; padding: 0 20px 2px; }
.picker { display: grid; align-items: center; height: 39px; border: 1px solid #d1d1d1; border-bottom-color: #616161; border-radius: 4px; background: #fff; }
.picker > * { grid-area: 1 / 1; }
.picker select { appearance: none; height: 37px; width: 100%; padding: 0 40px 0 15px; border: 0; outline: 0; background: none; font-size: 17px; }
.picker svg { justify-self: end; margin-right: 17px; color: #616161; pointer-events: none; }
.source { width: 313px; }
.source select { font-size: 16px; }
.typed select { color: transparent; background: linear-gradient(90deg, var(--ink) var(--name), #707070 var(--name)) text; }
.typed option { color: var(--ink); }
.latitude { --name: 82px; }
.longitude { --name: 96px; }
.neighbourhood { --name: 149px; }
.bikes { --name: 89px; }
.focused { border-bottom: 2px solid var(--green); }
.run { gap: 10px; font-weight: 600; color: #424242; }
.run svg { color: #0078d4; }
.editor { position: relative; display: flex; height: 18px; padding: 11px 0 0 41px; overflow: hidden; border-bottom: 1px solid #c8c8c8; font: 16px/22px "Liberation Mono", monospace; color: #237893; }
.editor code { margin-left: 28px; padding: 0 8px; border-left: 1px solid #bbb; background: #f1f7fd; font: inherit; color: #9c33cc; }
.minimap { position: absolute; right: 0; bottom: 1px; width: 18px; height: 4px; background: #555; border-top: 1px solid #aaa; }

.result-bar { display: flex; justify-content: space-between; height: 55px; padding: 0 20px 0 33px; }
.tabs { display: flex; gap: 24px; }
.tabs button, .panel-tabs button { padding: 4px 8px 0; border-bottom: 4px solid transparent; }
.tabs button { gap: 6px; margin-bottom: 2px; }
.panel-tabs button { padding-top: 8px; }
[role="tab"][aria-selected="true"] { font-weight: 600; border-image: linear-gradient(var(--green), var(--green)) 0 0 4 0; }
.status { display: flex; align-items: center; gap: 30px; font-size: 17px; }
.status span, .status label { display: flex; align-items: center; gap: 8px; }
.records { width: 18px; height: 14px; }
.records text { font: bold 8px "Open Sans", sans-serif; fill: var(--green); }

.switch { appearance: none; flex: none; width: 50px; height: 25px; margin: 0; padding: 3px; border-radius: 13px; background: var(--green); display: flex; justify-content: flex-end; }
.switch::before { content: ""; width: 19px; height: 19px; border-radius: 50%; background: #fff; }

.stage { flex: 1; display: flex; padding: 15px 20px; background: #f3f2f1; }
.card { flex: 1; min-width: 0; display: flex; flex-direction: column; padding: 0 15px 15px; border-radius: 10px; background: #fff; box-shadow: 0 1px 4px #0002; }
.card header { display: flex; justify-content: space-between; align-items: center; height: 60px; }
.card h2 { font-size: 16px; font-weight: 600; line-height: 20px; }
.card p { font-size: 12px; line-height: 20px; color: #616161; }

/* Map */
.map { position: relative; flex: 1; min-height: 300px; overflow: hidden; }
.map-art { position: absolute; inset: 0; width: 100%; height: 100%; }
.map-art .minor { fill: none; stroke: #f2cda9; stroke-width: 4; stroke-linejoin: round; }
.map-art .major { fill: none; stroke: #ff9955; stroke-width: 9; stroke-linejoin: round; }
.map-art .trunk { fill: none; stroke: #fbb887; stroke-width: 4; }
.map-art .border { fill: none; stroke: #6d5254; stroke-width: 5; }
.cities text, .parks text { paint-order: stroke; stroke: #f4fbf5; stroke-width: 3; stroke-linejoin: round; }
.cities { font: 18px Roboto, sans-serif; fill: #3d3d3d; }
.cities .big { font-size: 21px; }
.parks { font: italic 500 16px Roboto, sans-serif; fill: #2c5c1c; }
.dots { fill: #444; stroke: #fff; stroke-width: 1; }
.shields { font: bold 13px Roboto, sans-serif; fill: #fff; }
.shields rect { fill: #4c7dd9; stroke: #fff; }
.shields .euro rect { fill: #6fa86c; }
.bubbles circle { stroke-width: 2; }

.zoom { position: absolute; left: 13px; top: 13px; display: grid; box-shadow: 0 0 4px #0003; }
.zoom button { width: 40px; height: 40px; background: #fff; color: #8a8d90; font: 30px/38px "Liberation Sans", sans-serif; }
.zoom button + button { border-top: 1px solid #e3e3e3; }
.map-actions { position: absolute; right: 12px; top: 13px; display: flex; flex-direction: column; align-items: flex-end; gap: 5px; font-size: 17px; }
.map-actions label, .map-actions button { display: flex; align-items: center; background: #fff; box-shadow: 0 1px 3px #0004; color: #333; }
.map-actions label { gap: 15px; height: 45px; padding: 0 10px; }
.map-actions button { width: 120px; height: 37px; }
.azure { position: absolute; left: 13px; bottom: 3px; display: flex; align-items: center; gap: 5px; color: #737373; font-size: 14px; font-weight: 500; }
.azure svg { width: 19px; height: 17px; }
.copyright { position: absolute; right: 12px; bottom: 4px; display: flex; gap: 7px; color: #000; font-size: 11px; line-height: 16px; text-shadow: 0 0 2px #fff, 0 0 2px #fff; }
.copyright a { border-bottom: 1px solid #000; }

/* Formatting panel */
.panel { width: 446px; display: flex; flex-direction: column; border-left: 1px solid var(--line); }
.panel-tabs { display: flex; height: 54px; padding-left: 22px; gap: 26px; }
.panel-tabs .collapse-pane { margin-left: auto; padding: 8px 20px 0 0; }
.collapse-all { align-self: flex-start; gap: 10px; height: 54px; padding-left: 23px; color: #424242; }
.scroller { flex: 1; display: flex; min-height: 0; }
.fields { flex: 1; padding: 0 20px; }
.fields h3 { position: relative; z-index: 1; display: flex; align-items: center; height: 50px; font-size: 18px; font-weight: 600; background: #fff; }
.fields h3 button { width: 22px; margin-right: 24px; }
.fields h3 .show { display: flex; align-items: center; gap: 10px; margin-left: auto; font-size: 16px; font-weight: 400; }
.group { display: flex; flex-direction: column; padding-left: 46px; }
.group > label { margin: 20px 0 8px; font-weight: 600; }
.scrolled > label:first-child { margin-top: -6px; }
.group .reset { align-self: flex-start; height: 30px; margin: 20px 0 19px; padding-left: 14px; }
.size { border-top: 1px solid #8f8f8f; }
.size .group > label { margin: 6px 0 8px; }
.scrollbar { display: flex; flex-direction: column; align-items: center; width: 19px; padding: 12px 0; background: #fafafa; }
.up, .down { border: 7px solid transparent; border-top: 0; border-bottom-color: #8a8a8a; }
.down { border-top: 7px solid #8a8a8a; border-bottom: 0; }
.track { flex: 1; display: flex; padding: 9px 0; align-items: flex-end; }
.thumb { width: 11px; height: 62%; border-radius: 6px; background: #8a8a8a; }
```
